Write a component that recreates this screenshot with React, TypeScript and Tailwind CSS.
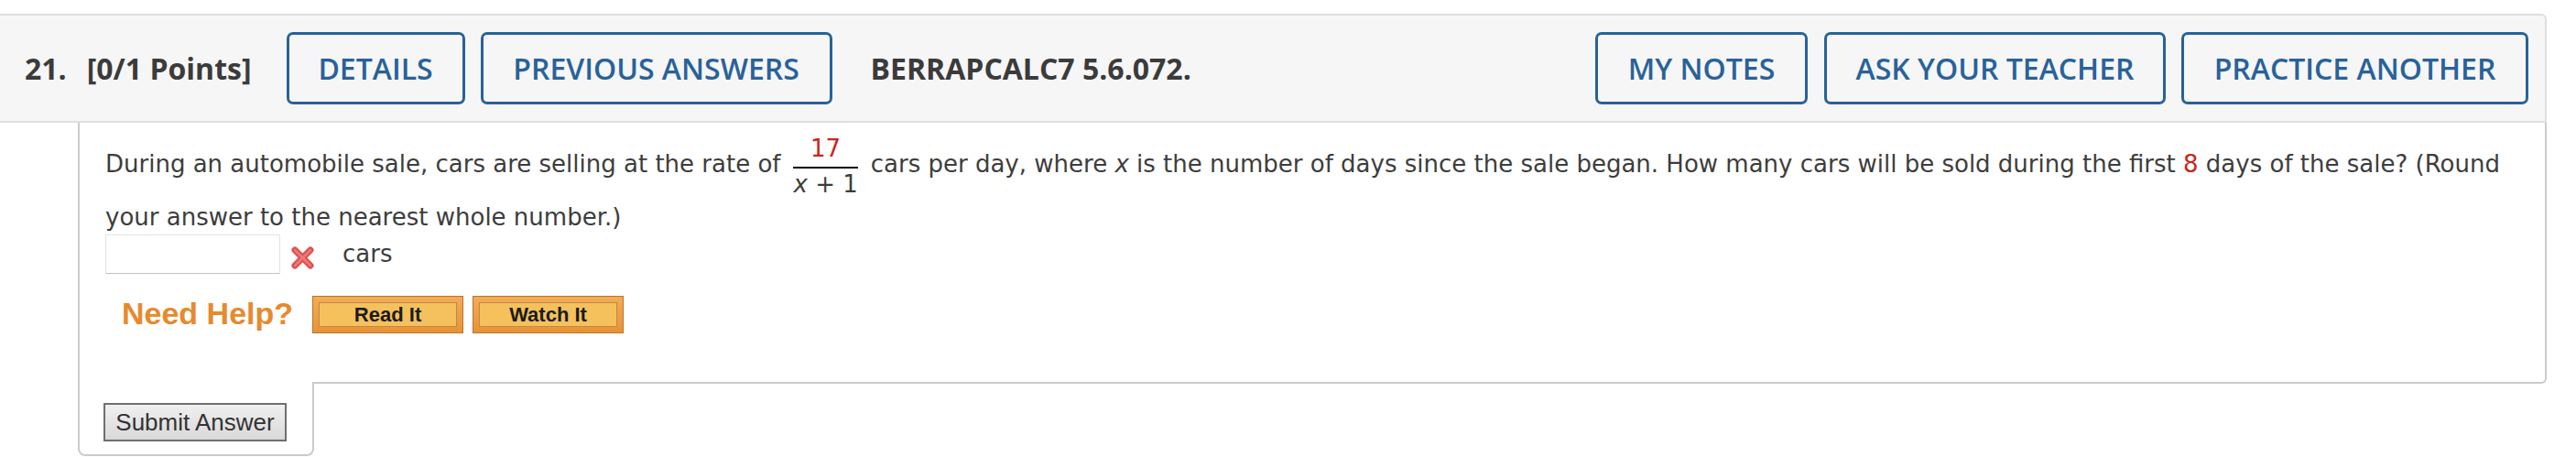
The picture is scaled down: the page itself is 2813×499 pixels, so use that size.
const headerBtn =
  "shrink-0 h-[79px] flex items-center justify-center rounded-[7px] border-[3px] border-[#28629a] text-[#28629a] font-semibold text-[32px]";

function XMark() {
  return (
    <svg width="27" height="27" viewBox="0 0 27 27" className="shrink-0">
      <path d="M5 5 L22 22 M22 5 L5 22" stroke="#e04f4f" strokeWidth="7" strokeLinecap="round" />
      <path d="M5 5 L22 22 M22 5 L5 22" stroke="#ee7a7a" strokeWidth="2.5" strokeLinecap="round" />
    </svg>
  );
}

function HelpButton({ label, className }: { label: string; className?: string }) {
  return (
    <div
      className={
        "w-[165px] h-[41px] border border-[#b57535] bg-gradient-to-b from-[#f2ac55] to-[#ea9232] p-[6px] " +
        (className ?? "")
      }
    >
      <div className="w-full h-full border border-[#b98a4c] bg-[#f4c15c] flex items-center justify-center text-[22px] font-bold text-[#1b1b1b] font-['Liberation_Sans',Arial,sans-serif]">
        {label}
      </div>
    </div>
  );
}

function Header() {
  return (
    <div className="flex items-center h-[119px] bg-[#f6f6f6] border-t-2 border-b-2 border-r-2 border-[#dedede] rounded-tr-[6px] pl-[27px] pr-[18px] font-['Open_Sans',sans-serif]">
      <span className="text-[32px] font-bold text-[#3b3b3b]">21.</span>
      <span className="ml-[22px] text-[32px] font-bold text-[#3b3b3b]">[0/1 Points]</span>
      <div className={headerBtn + " ml-[38px] w-[195px]"}>DETAILS</div>
      <div className={headerBtn + " ml-[17px] w-[384px]"}>PREVIOUS ANSWERS</div>
      <span className="ml-[42px] text-[32px] font-bold text-[#3b3b3b]">BERRAPCALC7 5.6.072.</span>
      <div className={headerBtn + " ml-auto w-[232px]"}>MY NOTES</div>
      <div className={headerBtn + " ml-[18px] w-[373px]"}>ASK YOUR TEACHER</div>
      <div className={headerBtn + " ml-[17px] w-[379px]"}>PRACTICE ANOTHER</div>
    </div>
  );
}

function Question() {
  return (
    <div className="ml-[85px] h-[285px] border-l-2 border-r-2 border-b-2 border-[#cbcbcb] rounded-br-[6px] pl-[28px] text-[26px] text-[#3d3d3d] font-['DejaVu_Sans',Verdana,sans-serif]">
      <div className="flex items-start pt-[13px]">
        <span className="mt-[17px] leading-[30px] whitespace-nowrap">
          During an automobile sale, cars are selling at the rate of
        </span>
        <span className="mx-[9px] px-[5px] flex flex-col items-stretch text-[26px]">
          <span className="leading-[30px] text-center text-[#c8261c]">17</span>
          <span className="mt-[5px] h-[2px] bg-black" />
          <span className="mt-[2px] leading-[30px] text-center whitespace-nowrap">
            <i>x</i> + 1
          </span>
        </span>
        <span className="mt-[17px] leading-[30px] whitespace-nowrap">
          cars per day, where <i>x</i> is the number of days since the sale began. How many cars will be
          sold during the first <span className="text-[#c8261c]">8</span> days of the sale? (Round
        </span>
      </div>
      <div className="mt-[6px] leading-[30px] whitespace-nowrap">your answer to the nearest whole number.)</div>
      <div className="mt-[4px] flex items-start">
        <input
          type="text"
          className="w-[191px] h-[43px] bg-white border border-[#e3e3e3] border-b-[#c2c2c2] outline-none"
        />
        <span className="ml-[11px] mt-[12px]">
          <XMark />
        </span>
        <span className="ml-[30px] mt-[6px] leading-[30px]">cars</span>
      </div>
      <div className="mt-[24px] flex items-start">
        <span className="ml-[18px] mt-[2px] text-[34px] leading-[34px] font-bold text-[#e68a2e] font-['Liberation_Sans',Arial,sans-serif]">
          Need Help?
        </span>
        <HelpButton label="Read It" className="ml-[21px]" />
        <HelpButton label="Watch It" className="ml-[10px]" />
      </div>
    </div>
  );
}

function SubmitTab() {
  return (
    <div className="relative ml-[85px] -mt-[2px] w-[258px] h-[81px] bg-white border-l-2 border-r-2 border-b-2 border-[#cbcbcb] rounded-b-[8px] pl-[26px] pt-[23px]">
      <button className="w-[200px] h-[42px] border-2 border-[#6f6f6f] bg-gradient-to-b from-[#f0f0f0] to-[#d9d9d9] text-[26px] text-[#333] font-['Liberation_Sans',Arial,sans-serif] leading-none">
        Submit Answer
      </button>
    </div>
  );
}

export default function App() {
  return (
    <div className="w-[2813px] h-[499px] overflow-hidden bg-white pt-[15px]">
      <div className="w-[2781px]">
        <Header />
        <Question />
        <SubmitTab />
      </div>
    </div>
  );
}
